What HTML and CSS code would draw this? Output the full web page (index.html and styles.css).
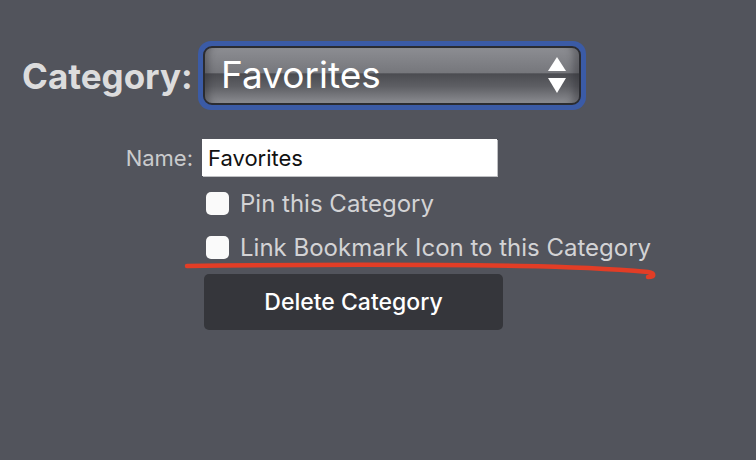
FILE: index.html
```html
<!DOCTYPE html>
<html>
<head>
<meta charset="utf-8">
<link rel="stylesheet" href="styles.css">
</head>
<body>
<div class="panel">
  <div class="row cat-row">
    <div class="cat-label">Category:</div>
    <div class="select-ring">
      <div class="select">
        <span class="select-text">Favorites</span>
        <svg class="arrows" width="20" height="38" viewBox="0 0 20 38">
          <polygon points="10,0 19,14 1,14" fill="#fff"/>
          <polygon points="1,21 19,21 10,36" fill="#fff"/>
        </svg>
      </div>
    </div>
  </div>
  <div class="row name-row">
    <div class="name-label">Name:</div>
    <div class="name-input">Favorites</div>
  </div>
  <div class="opts">
    <div class="check-row"><span class="box"></span><span class="check-text">Pin this Category</span></div>
    <div class="check-row"><span class="box"></span><span class="check-text">Link Bookmark Icon to this Category</span></div>
    <div class="btn">Delete Category</div>
  </div>
  <svg class="scribble" width="756" height="460" viewBox="0 0 756 460">
    <path d="M187 266 C 260 265, 400 264, 520 266 C 580 267, 625 270, 648 272 C 655 273, 655 277, 648 277" fill="none" stroke="#e23d26" stroke-width="4.5" stroke-linecap="round"/>
  </svg>
</div>
</body>
</html>
```

FILE: styles.css
```css
html, body {
  margin: 0;
  padding: 0;
  background: #52545c;
}
body {
  width: 756px;
  height: 460px;
  overflow: hidden;
  font-family: Inter, "Liberation Sans", sans-serif;
}
.panel {
  position: relative;
  width: 756px;
  height: 460px;
  padding-top: 41px;
  box-sizing: border-box;
}
.row {
  display: flex;
  align-items: center;
}
.cat-label {
  width: 193px;
  box-sizing: border-box;
  padding-left: 22px;
  font-size: 35px;
  font-weight: 700;
  color: #dcdcdd;
  white-space: nowrap;
}
.select-ring {
  margin-left: 5px;
  width: 388px;
  height: 69px;
  box-sizing: border-box;
  border-radius: 13px;
  background: #3b5ba6;
  padding: 5px;
}
.select {
  height: 100%;
  box-sizing: border-box;
  border: 2px solid #2b2c31;
  border-radius: 9px;
  background: linear-gradient(to bottom, #8c8d92 0%, #76777c 45%, #4b4c51 47%, #5e5f64 70%, #8a8b90 100%);
  display: flex;
  align-items: center;
  padding-left: 16px;
  padding-right: 12px;
  box-shadow: inset 10px 0 6px -6px rgba(40,40,45,0.35), inset -12px 0 6px -6px rgba(40,40,45,0.35);
}
.select-text {
  flex: 1;
  font-size: 37px;
  color: #ffffff;
  line-height: 1;
  margin-top: -2px;
}
.arrows {
  display: block;
}
.name-row {
  margin-top: 29px;
}
.name-label {
  width: 193px;
  text-align: right;
  font-size: 22px;
  color: #cacbcd;
}
.name-input {
  margin-left: 9px;
  width: 295px;
  height: 37px;
  box-sizing: border-box;
  background: #ffffff;
  box-shadow: 1px 1px 0 #bfc0c3;
  padding-left: 6px;
  display: flex;
  align-items: center;
  font-size: 22px;
  color: #111;
}
.opts {
  margin-left: 206px;
  margin-top: 15px;
}
.check-row {
  display: flex;
  align-items: center;
  height: 24px;
  margin-bottom: 20px;
}
.box {
  width: 23px;
  height: 23px;
  background: #fafafa;
  border-radius: 5px;
  margin-right: 11px;
}
.check-text {
  font-size: 24px;
  color: #d3d3d5;
  white-space: nowrap;
}
.btn {
  margin-left: -2px;
  margin-top: -5px;
  width: 299px;
  height: 56px;
  background: #35363b;
  border-radius: 5px;
  display: flex;
  align-items: center;
  justify-content: center;
  font-size: 23px;
  font-weight: 500;
  color: #ffffff;
}
.scribble {
  position: absolute;
  left: 0;
  top: 0;
  pointer-events: none;
}
```
